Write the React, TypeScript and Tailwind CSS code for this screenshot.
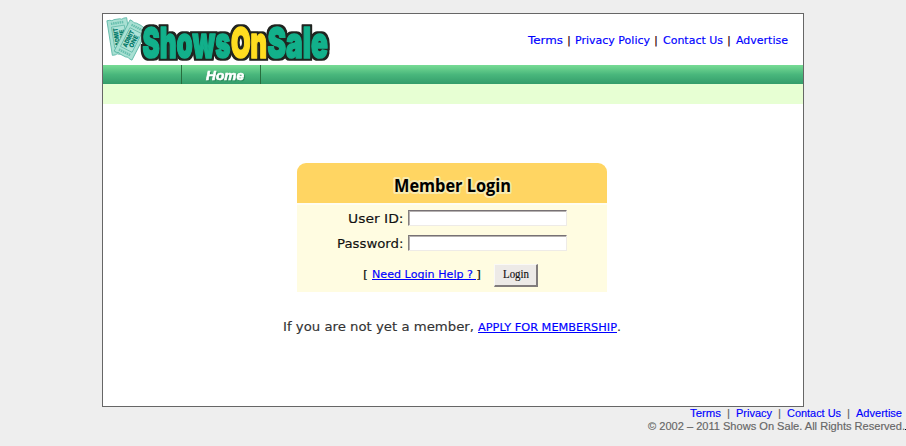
import React from "react";

const verdana = "font-['Verdana','DejaVu_Sans',sans-serif]";

function Label({ text, width, size, fill = "#00f", weight = 0.15, className = "" }: { text: string; width: number; size: number; fill?: string; weight?: number; className?: string }) {
  return (
    <svg width={width} height={16} className={`block shrink-0 overflow-visible ${className}`}>
      <text x="0" y="12" fontSize={size} fill={fill} stroke={fill} strokeWidth={weight} textLength={width} lengthAdjust="spacingAndGlyphs">{text}</text>
    </svg>
  );
}

function Ticket({ transform }: { transform: string }) {
  return (
    <g transform={transform}>
      <path d="M-10 -17.5H-7Q-5 -16 -3 -17.5H3Q5 -16 7 -17.5H10V17.5H7Q5 16 3 17.5H-3Q-5 16 -7 17.5H-10Z" fill="#a9e0d3" stroke="#58b5a4" strokeWidth=".8" />
      <rect x="-6.5" y="-10.5" width="13" height="21" fill="#b0e3d8" stroke="#58b5a4" strokeWidth=".7" />
      <path d="M-6.5 -13.8H6.5M-6.5 13.8H6.5" stroke="#68bfae" strokeWidth="2.5" strokeDasharray="1.5 .7" />
      <g transform="rotate(-90)" fill="#087c6b" fontSize="6.5" fontWeight="900" textAnchor="middle">
        <text x="0" y="-0.6" textLength="18" lengthAdjust="spacingAndGlyphs">ADMIT</text>
        <text x="0" y="5.2" textLength="13" lengthAdjust="spacingAndGlyphs">ONE</text>
      </g>
    </g>
  );
}

function Logo() {
  return (
    <svg width="230" height="51" viewBox="103 14 230 51" className="block shrink-0 font-['Inter',sans-serif]">
      <defs>
        <filter id="outline" filterUnits="userSpaceOnUse" x="130" y="14" width="205" height="51" colorInterpolationFilters="sRGB">
          <feMorphology in="SourceAlpha" operator="dilate" radius="1.6" result="edge" />
          <feGaussianBlur in="edge" stdDeviation=".4" result="soft" />
          <feFlood floodColor="#20231f" />
          <feComposite in2="soft" operator="in" result="dark" />
          <feMerge>
            <feMergeNode in="dark" />
            <feMergeNode in="SourceGraphic" />
          </feMerge>
        </filter>
      </defs>
      <Ticket transform="translate(119.5 36.5) rotate(-9)" />
      <Ticket transform="translate(131 40) rotate(27)" />
      <g fontSize="43" fontWeight="900" strokeWidth="1.7" strokeLinejoin="round" filter="url(#outline)">
        <text x="142.5" y="57.5" textLength="88" lengthAdjust="spacingAndGlyphs" fill="#12b08b" stroke="#12b08b">Shows</text>
        <text x="267.5" y="57.5" textLength="60.5" lengthAdjust="spacingAndGlyphs" fill="#12b08b" stroke="#12b08b">Sale</text>
        <text x="231" y="57.5" textLength="36" lengthAdjust="spacingAndGlyphs" fill="#ffdd20" stroke="#ffdd20">On</text>
      </g>
    </svg>
  );
}

const field = "h-4 w-[159px] border border-t-[#777174] border-l-[#85807f] border-r-[#eeebe7] border-b-[#eeebe7] bg-white p-0 shadow-[inset_1px_1px_0_#b5b1b0] outline-none";

export default function App() {
  return (
    <div className={`h-[446px] w-[906px] overflow-hidden bg-[#eee] pt-[13px] ${verdana}`}>
      <main className="ml-[102px] flex h-[394px] w-[702px] flex-col border border-[#666] bg-white">
        <header className="flex h-[51px] shrink-0">
          <Logo />
          <nav className="ml-auto mr-[15px] mt-[18px] flex h-4">
            <a href="#"><Label text="Terms" width={35} size={11} /></a>
            <Label text="|" width={4} size={11} fill="#300" className="mx-1" />
            <a href="#"><Label text="Privacy Policy" width={75} size={11} /></a>
            <Label text="|" width={4} size={11} fill="#300" className="ml-1 mr-[5px]" />
            <a href="#"><Label text="Contact Us" width={60} size={11} /></a>
            <Label text="|" width={4} size={11} fill="#300" className="ml-1 mr-[5px]" />
            <a href="#"><Label text="Advertise" width={52} size={11} /></a>
          </nav>
        </header>
        <nav className="flex h-[19px] shrink-0 bg-linear-to-b from-[#77dc95] via-[#49b77c] to-[#349d6b]">
          <div className="w-[79px] border-r border-[#276d3e]" />
          <a href="#" className="w-[79px] border-r border-[#276d3e] pl-6 pt-[3px] font-['Liberation_Sans',sans-serif]">
            <Label text="Home" width={38} size={12.5} fill="white" weight={0.6} className="font-bold italic drop-shadow-[1px_1px_0_#2a8a5b]" />
          </a>
        </nav>
        <div className="h-5 shrink-0 bg-[#e7ffd3]" />
        <section className="ml-[194px] mt-[59px] w-[310px]">
          <h1 className="flex h-10 justify-center rounded-t-[9px] bg-[#ffd562] pt-[17px] font-['Open_Sans',sans-serif]">
            <svg width="117" height="20" className="overflow-visible">
              <text x="0" y="12" fontSize="17" fontWeight="700" textLength="117" lengthAdjust="spacingAndGlyphs" stroke="#f8eaad" strokeWidth="4" strokeLinejoin="round" className="[paint-order:stroke]">Member Login</text>
            </svg>
          </h1>
          <form className="h-[89px] border-t-2 border-[#fffdf2] bg-[#fffce1]" onSubmit={(e) => e.preventDefault()}>
            <label className="flex pl-[51px] pt-[5px]">
              <Label text="User ID:" width={55.5} size={13} fill="#111" className="mr-[4.5px] mt-[1px]" />
              <input className={field} />
            </label>
            <label className="mt-2 flex pl-10">
              <Label text="Password:" width={66.5} size={13} fill="#111" className="mr-[4.5px] mt-[1px]" />
              <input type="password" className={field} />
            </label>
            <div className="flex pl-[66px] pt-3">
              <Label text="[" width={5} size={11} fill="#111" className="mr-1 mt-[2px]" />
              <a href="#" className="mt-[2px] h-[14px] border-b border-[#00f]"><Label text="Need Login Help ?" width={101} size={11} className="mr-[3px]" /></a>
              <Label text="]" width={5} size={11} fill="#111" className="mt-[2px]" />
              <button className="ml-[13px] flex h-[23px] w-11 items-center justify-center border-2 border-t border-l border-t-[#faf9f6] border-l-[#faf9f6] border-r-[#817c7c] border-b-[#817c7c] bg-[#edeae7] font-['Liberation_Serif',serif]">
                <Label text="Login" width={26} size={11.5} fill="#111" className="-mt-[2px]" />
              </button>
            </div>
          </form>
        </section>
        <p className="ml-[180px] mt-[27px] flex">
          <Label text="If you are not yet a member," width={191} size={13} fill="#333" className="mr-1" />
          <a href="#" className="h-[14px] border-b border-[#00f]"><Label text="APPLY FOR MEMBERSHIP" width={139} size={11} /></a>
          <Label text="." width={4} size={13} fill="#333" />
        </p>
      </main>
      <footer className="flex flex-col items-end pr-1 font-['Liberation_Sans',sans-serif]">
        <nav className="-mt-[2px] flex h-[13px]">
          <a href="#"><Label text="Terms" width={31} size={11} /></a>
          <Label text="|" width={3} size={11} fill="#666" className="ml-[6px] mr-[6px]" />
          <a href="#"><Label text="Privacy" width={36} size={11} /></a>
          <Label text="|" width={3} size={11} fill="#666" className="ml-[6px] mr-[6px]" />
          <a href="#"><Label text="Contact Us" width={54} size={11} /></a>
          <Label text="|" width={3} size={11} fill="#666" className="ml-[6px] mr-[6px]" />
          <a href="#"><Label text="Advertise" width={46} size={11} /></a>
        </nav>
        <div className="-mr-1 flex">
          <Label text="© 2002 – 2011 Shows On Sale. All Rights Reserved." width={257} size={11} fill="#666" />
          <span className="mt-[11px] h-px w-px bg-black" />
        </div>
      </footer>
    </div>
  );
}
